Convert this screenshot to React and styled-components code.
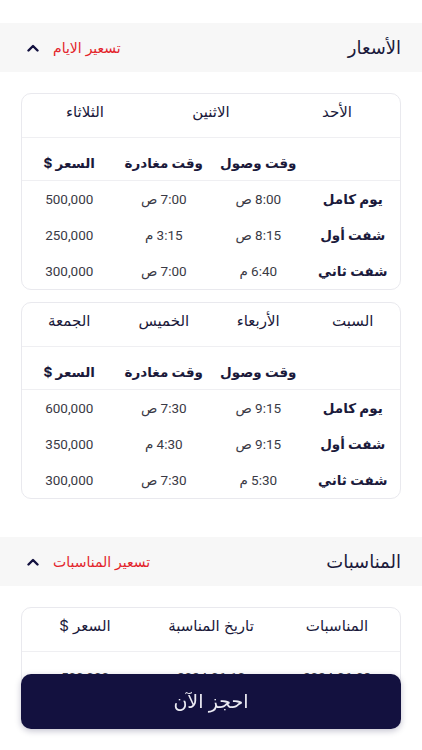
import styled, { createGlobalStyle } from 'styled-components';

const GlobalStyle = createGlobalStyle`
  body {
    margin: 0;
    background: #ffffff;
    font-family: "Inter", "DejaVu Sans", sans-serif;
    direction: rtl;
    color: #1b1a3b;
  }
`;

const Page = styled.div`
  padding-top: 23px;
`;

const SectionHeader = styled.div`
  display: flex;
  align-items: center;
  justify-content: space-between;
  height: 49px;
  padding: 0 21px 0 27px;
  background: #f7f7f7;
  margin-top: ${(p) => p.$top || 0}px;
`;

const SectionTitle = styled.h2`
  margin: 0;
  font-size: 18px;
  font-weight: 500;
  color: #1b1a3b;
`;

const Toggle = styled.div`
  display: flex;
  align-items: center;
  gap: 14px;
`;

const ToggleLabel = styled.span`
  font-size: 14px;
  color: #e3242b;
`;

const Card = styled.div`
  margin: ${(p) => p.$top}px 21px 0;
  border: 1px solid #e9e9ee;
  border-radius: 10px;
  overflow: hidden;
`;

const Row = styled.div`
  display: grid;
  grid-template-columns: repeat(${(p) => p.$cols}, 1fr);
  align-items: center;
  height: ${(p) => p.$h}px;
  padding-bottom: ${(p) => p.$lift || 0}px;
  border-bottom: ${(p) => (p.$line ? '1px solid #efeff2' : 'none')};
  box-sizing: border-box;
`;

const HeadRow = styled(Row)`
  align-items: end;
  padding-bottom: 9px;
`;

const Cell = styled.div`
  text-align: center;
  font-size: ${(p) => (p.$bold ? 13.5 : p.$medium ? 15 : 13.5)}px;
  font-family: ${(p) => (p.$bold || p.$medium ? '"Inter", "DejaVu Sans", sans-serif' : '"Roboto", "DejaVu Sans", sans-serif')};
  font-weight: ${(p) => (p.$bold ? 700 : 400)};
  color: ${(p) => (p.$bold || p.$medium ? '#1b1a3b' : '#3a3a45')};
  white-space: nowrap;
`;

const BookButton = styled.button`
  position: fixed;
  left: 21px;
  right: 21px;
  bottom: 21px;
  height: 55px;
  border: none;
  border-radius: 10px;
  background: #13113f;
  color: #ececf4;
  font-family: "Inter", "DejaVu Sans", sans-serif;
  font-size: 19px;
  box-shadow: 0 2px 6px rgba(19, 17, 63, 0.25);
`;

const Chevron = () => (
  <svg width="12" height="8" viewBox="0 0 12 8">
    <path d="M1.5 6.5 L6 2 L10.5 6.5" fill="none" stroke="#13113f" strokeWidth="2.4" strokeLinecap="round" strokeLinejoin="round" />
  </svg>
);

const weeks = [
  {
    days: ['الأحد', 'الاثنين', 'الثلاثاء'],
    rows: [
      ['يوم كامل', '8:00 ص', '7:00 ص', '500,000'],
      ['شفت أول', '8:15 ص', '3:15 م', '250,000'],
      ['شفت ثاني', '6:40 م', '7:00 ص', '300,000'],
    ],
  },
  {
    days: ['السبت', 'الأربعاء', 'الخميس', 'الجمعة'],
    rows: [
      ['يوم كامل', '9:15 ص', '7:30 ص', '600,000'],
      ['شفت أول', '9:15 ص', '4:30 م', '350,000'],
      ['شفت ثاني', '5:30 م', '7:30 ص', '300,000'],
    ],
  },
];

const PriceCard = ({ week, top }) => (
  <Card $top={top}>
    <Row $cols={week.days.length} $h={44} $lift={8} $line>
      {week.days.map((d) => (
        <Cell key={d} $medium>{d}</Cell>
      ))}
    </Row>
    <HeadRow $cols={4} $h={43} $line>
      <Cell />
      <Cell $bold>وقت وصول</Cell>
      <Cell $bold>وقت مغادرة</Cell>
      <Cell $bold>السعر $</Cell>
    </HeadRow>
    {week.rows.map((r) => (
      <Row key={r[0]} $cols={4} $h={36}>
        <Cell $bold>{r[0]}</Cell>
        <Cell>{r[1]}</Cell>
        <Cell>{r[2]}</Cell>
        <Cell>{r[3]}</Cell>
      </Row>
    ))}
  </Card>
);

const App = () => (
  <Page>
    <GlobalStyle />
    <SectionHeader>
      <SectionTitle>الأسعار</SectionTitle>
      <Toggle>
        <ToggleLabel>تسعير الايام</ToggleLabel>
        <Chevron />
      </Toggle>
    </SectionHeader>
    <PriceCard week={weeks[0]} top={21} />
    <PriceCard week={weeks[1]} top={12} />

    <SectionHeader $top={38}>
      <SectionTitle>المناسبات</SectionTitle>
      <Toggle>
        <ToggleLabel>تسعير المناسبات</ToggleLabel>
        <Chevron />
      </Toggle>
    </SectionHeader>
    <Card $top={21}>
      <Row $cols={3} $h={44} $lift={8} $line>
        <Cell $medium>المناسبات</Cell>
        <Cell $medium>تاريخ المناسبة</Cell>
        <Cell $medium>السعر $</Cell>
      </Row>
      <Row $cols={3} $h={50}>
        <Cell>2024-06-08</Cell>
        <Cell>2024-06-10</Cell>
        <Cell>500,000</Cell>
      </Row>
    </Card>

    <BookButton>احجز الآن</BookButton>
  </Page>
);

export default App;
